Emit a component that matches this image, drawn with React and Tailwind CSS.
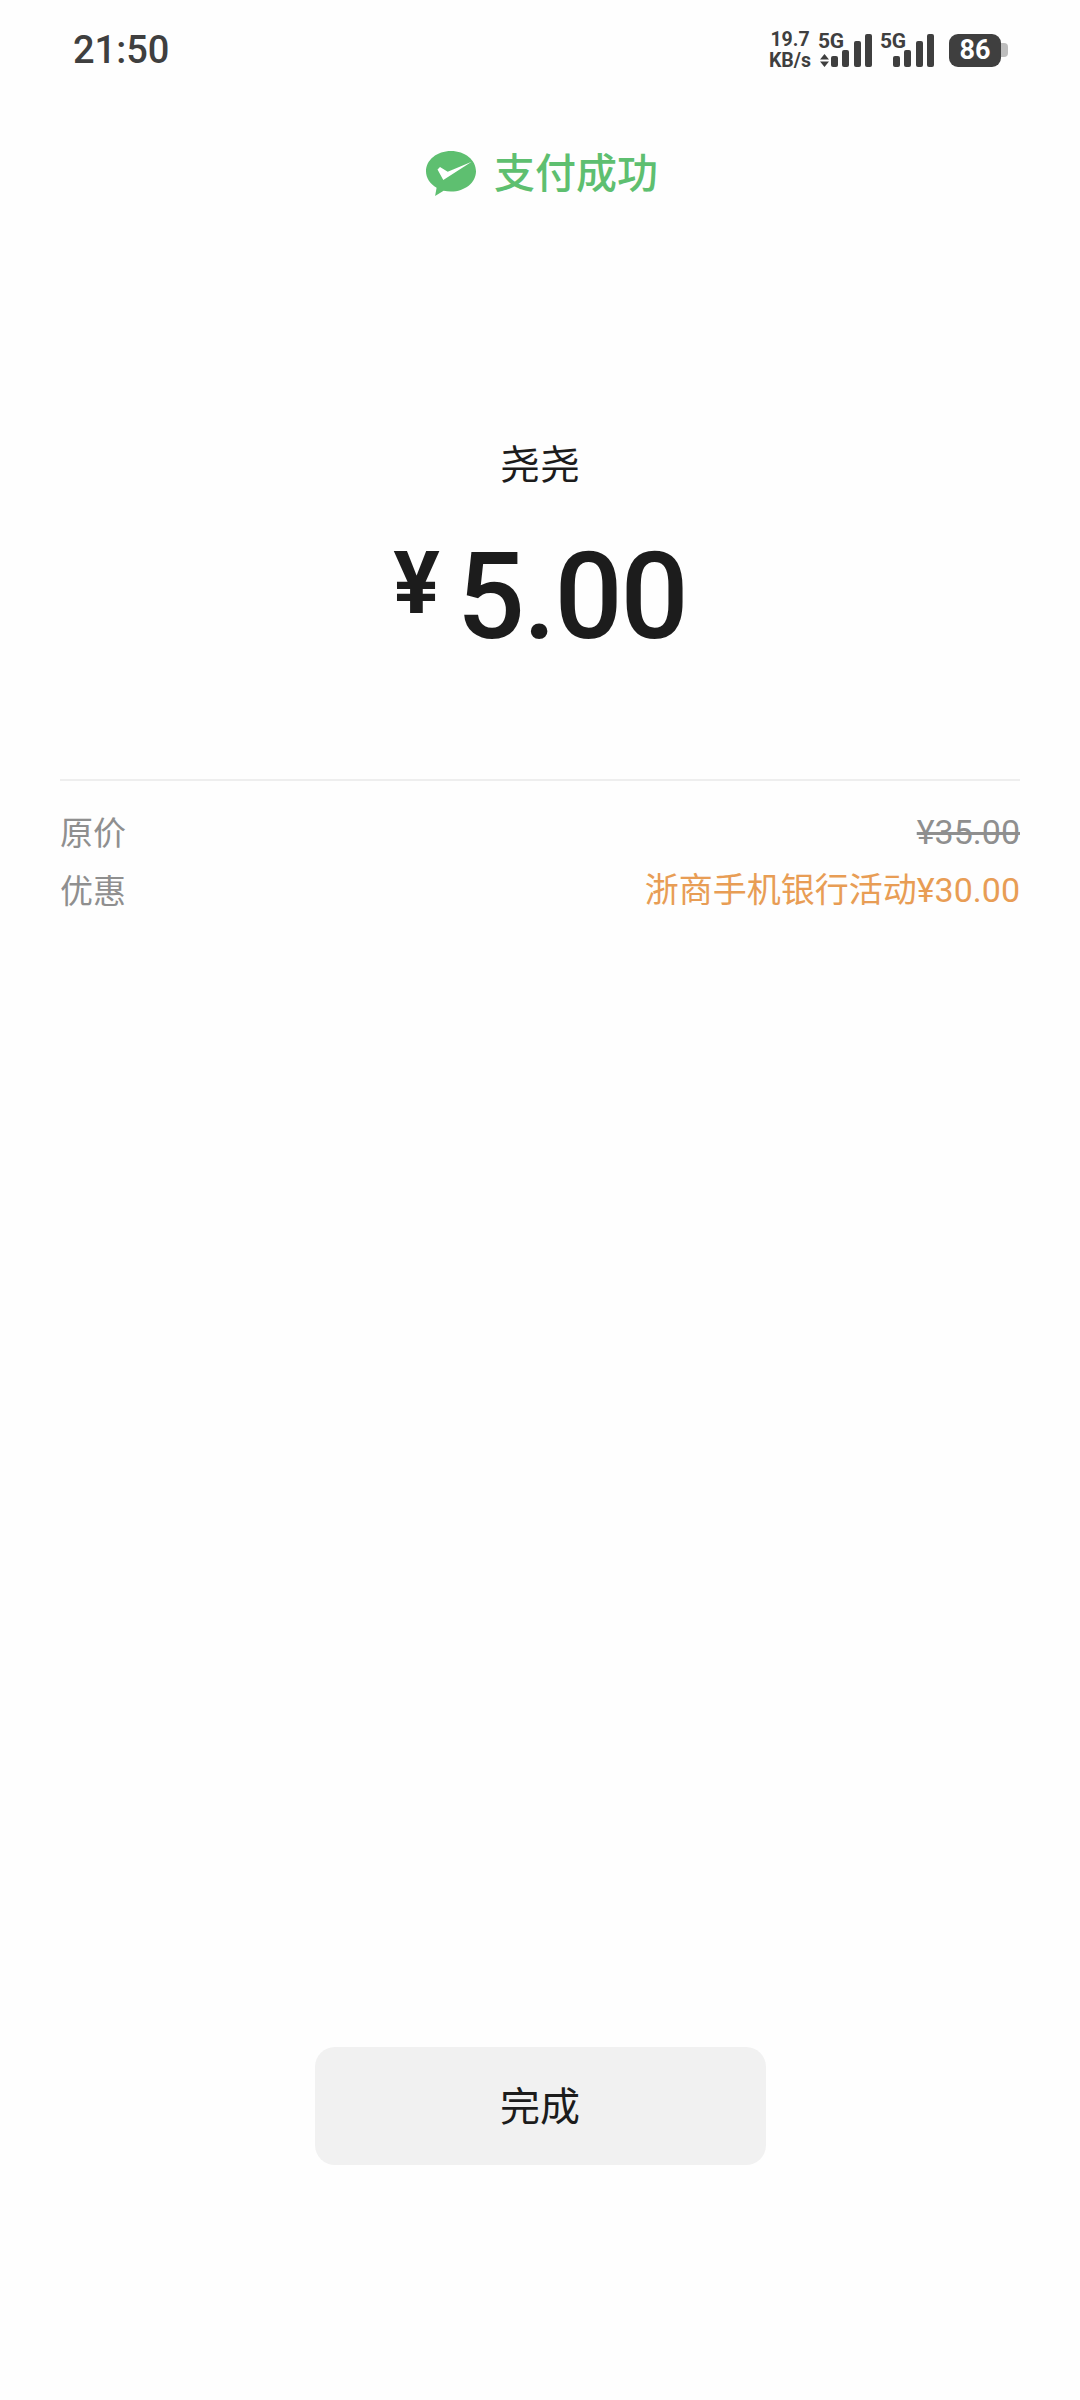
import React from "react";

const CJK = "font-['Noto_Sans_CJK_SC',sans-serif]";
const NUM = "font-['Roboto','Noto_Sans_CJK_SC',sans-serif]";

function SignalBars({ className }) {
  return (
    <svg className={className} width="42" height="33" viewBox="0 0 42 33" fill="#3f3f3f">
      <rect x="0" y="22" width="7" height="11" rx="2" />
      <rect x="11" y="16" width="7" height="17" rx="2" />
      <rect x="23" y="7" width="7" height="26" rx="2" />
      <rect x="34" y="0" width="7" height="33" rx="2" />
    </svg>
  );
}

function FiveG({ arrows }) {
  return (
    <div className="grid w-[55px] h-[33px] relative">
      <span className="col-start-1 row-start-1 self-start justify-self-start text-[21px] leading-[14px] font-bold text-[#3f3f3f] tracking-[-0.3px]">5G</span>
      <SignalBars className="col-start-1 row-start-1 justify-self-end" />
      {arrows && (
        <svg className="col-start-1 row-start-1 self-end ml-[2px]" width="9" height="13" viewBox="0 0 9 13" fill="#3f3f3f">
          <path d="M4.500 0l4.500 5.500H0zM4.500 13L0 7.500h9z" />
        </svg>
      )}
    </div>
  );
}

function WeChatPayIcon() {
  return (
    <svg className="mt-[5px]" width="52" height="46" viewBox="0 0 52 46">
      <path
        fill="#5ebf70"
        d="M26 0C12 0 1 9 1 20.300c0 6.900 4.200 12.900 10.600 16.400l-1.500 8.300 8.500-5.200c2.300.5 4.800.8 7.400.8 14 0 25-9 25-20.300S40 0 26 0z"
      />
      <path fill="#ffffff" d="M12.500 18.500L15 16l7.700 4.700L46.700 10.700 18.300 29z" />
    </svg>
  );
}

export default function App() {
  return (
    <div className={`w-[1080px] h-[2400px] bg-[#fefefe] flex flex-col ${CJK}`}>
      {/* status bar */}
      <div className="flex items-center justify-between h-[100px] pl-[73px] pr-[72px]">
        <span className="font-['Roboto',sans-serif] text-[38px] font-medium text-[#3f3f3f]">21:50</span>
        <div className={`flex items-center ${NUM}`}>
          <div className="flex flex-col items-center w-[44px] text-[19.5px] leading-[21px] font-bold text-[#3f3f3f]">
            <span>19.7</span>
            <span>KB/s</span>
          </div>
          <div className="ml-[6px]"><FiveG arrows /></div>
          <div className="ml-[7px]"><FiveG /></div>
          <div className="ml-[14px] w-[52px] h-[33px] rounded-[9px] bg-[#3f3f3f] flex items-center justify-center text-white text-[27px] font-bold">86</div>
          <div className="w-[7px] h-[14px] rounded-r-[4px] bg-[#bdbdbd]"></div>
        </div>
      </div>

      {/* payment result */}
      <div className="flex items-start justify-center h-[48px] mt-[46px] pl-[3px] gap-[17px]">
        <WeChatPayIcon />
        <span className="text-[41px] leading-[48px] font-medium text-[#5ebf70]">支付成功</span>
      </div>

      <div className="text-center text-[40px] leading-[56px] text-[#1c1c1c] mt-[240px]">尧尧</div>

      <div className={`flex items-baseline justify-center mt-[47px] text-[#1c1c1c] ${NUM}`}>
        <span className="text-[87px] leading-[120px] font-bold relative bottom-[25px] mr-[17px]">¥</span>
        <span className="text-[120px] leading-[120px] font-medium tracking-[-2px]">5.00</span>
      </div>

      {/* price detail */}
      <div className="mx-[60px] mt-[111px] border-t-2 border-[#eeeeee] pt-[22px] text-[33px] leading-[57px]">
        <div className="flex justify-between text-[#8f8f8f]">
          <span>原价</span>
          <span className={`${NUM} text-[34px] mt-[1px] line-through`}>¥35.00</span>
        </div>
        <div className="flex justify-between">
          <span className="text-[#8f8f8f]">优惠</span>
          <span className={`${NUM} text-[34px] mt-[1px] text-[#e89d55]`}>浙商手机银行活动¥30.00</span>
        </div>
      </div>

      <button className="mt-auto mb-[235px] mx-auto pb-[4px] w-[451px] h-[118px] rounded-[20px] bg-[#f1f1f1] text-[40px] text-[#1c1c1c]">完成</button>
    </div>
  );
}
